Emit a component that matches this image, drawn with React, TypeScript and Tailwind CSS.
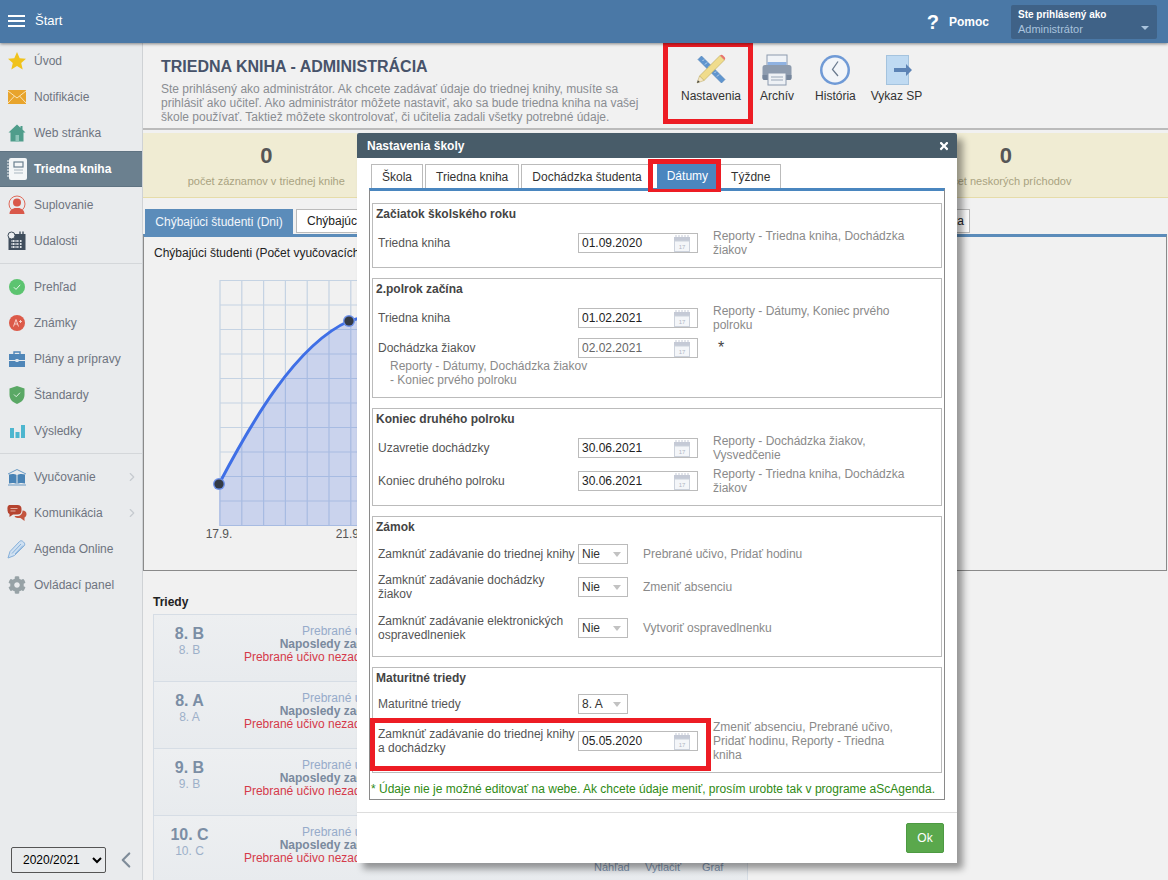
import React from 'react';
import { FaCog, FaTimes } from 'react-icons/fa';
import { ChevronLeft, ChevronRight } from 'lucide-react';

// --- Sidebar icons ---
const StarIcon = () => (
  <svg width="20" height="20" viewBox="0 0 20 20"><polygon points="10,1 12.7,7.2 19,7.7 14.2,12 15.7,18.6 10,15.1 4.3,18.6 5.8,12 1,7.7 7.3,7.2" fill="#f0c31c" /></svg>
);
const MailIcon = () => (
  <svg width="20" height="16" viewBox="0 0 20 16"><rect x="1" y="1" width="18" height="14" fill="#e8a42c" /><path d="M1 2l9 7 9-7M1 14l6.5-7M19 14l-6.5-7" stroke="#fbe4b4" strokeWidth="1" fill="none" /></svg>
);
const HouseIcon = () => (
  <svg width="20" height="20" viewBox="0 0 20 20"><path d="M10 1.5L1.5 9.5H3.5V18.5H16.5V9.5H18.5L15.5 6.6V3H13.5V4.8Z" fill="#4f9d8b" /><rect x="8.5" y="12" width="3.5" height="6.5" fill="#8cc4b8" /></svg>
);
const NotebookIcon = () => (
  <svg width="22" height="24" viewBox="0 0 22 24">
    <rect x="3" y="1" width="18" height="22" rx="2" fill="#f4f6f7" />
    <rect x="8" y="5" width="9" height="5" fill="none" stroke="#6b808f" strokeWidth="1.2" />
    <path d="M8 13h9M8 16h9" stroke="#a9b6bf" strokeWidth="1" />
    <path d="M1 4h4M1 7h4M1 10h4M1 13h4M1 16h4M1 19h4" stroke="#f4f6f7" strokeWidth="1.2" />
  </svg>
);
const PersonIcon = () => (
  <svg width="20" height="20" viewBox="0 0 20 20">
    <circle cx="10" cy="9" r="8" fill="none" stroke="#df6a5a" strokeWidth="1" />
    <circle cx="10" cy="7.5" r="4" fill="#d9584a" />
    <path d="M2.5 19c0-4 3-5 5-6h5c2 1 5 2 5 6z" fill="#d9584a" />
  </svg>
);
const CalendarIcon = () => (
  <svg width="20" height="20" viewBox="0 0 20 20">
    <rect x="1.5" y="3" width="17" height="16" fill="#3f4d5c" />
    <circle cx="4.5" cy="4.5" r="3.5" fill="#eceef0" stroke="#3f4d5c" strokeWidth="1" />
    <path d="M13 0.5v4M16 0.5v4" stroke="#3f4d5c" strokeWidth="1.4" />
    <path d="M4 10h12M4 13h12M4 16h12M6.5 9v8.5M10 9v8.5M13.5 9v8.5" stroke="#dfe3e6" strokeWidth="1.2" strokeDasharray="2 1" />
  </svg>
);
const CheckCircleIcon = () => (
  <svg width="18" height="18" viewBox="0 0 18 18"><circle cx="9" cy="9" r="8" fill="#5cc470" /><path d="M5.8 9.2l2.2 2.2 4.2-4.6" stroke="#e6f7ea" strokeWidth="1" fill="none" /></svg>
);
const GradeIcon = () => (
  <svg width="18" height="18" viewBox="0 0 18 18"><circle cx="9" cy="9" r="8" fill="#dc5a49" /><path d="M5.5 12.5L8 5.5l2.5 7M6.5 10h3.5M11 7.5h3M12.5 6v3" stroke="#f8d8d2" strokeWidth="0.9" fill="none" /></svg>
);
const CaseIcon = () => (
  <svg width="20" height="18" viewBox="0 0 20 18">
    <path d="M7 4V2h6v2" fill="none" stroke="#4f86b8" strokeWidth="1.4" />
    <rect x="2" y="4" width="16" height="6" fill="#4f86b8" /><rect x="2" y="11" width="16" height="6" fill="#4f86b8" />
    <rect x="8.5" y="9" width="3" height="3" fill="#dbe6f0" />
  </svg>
);
const ShieldIcon = () => (
  <svg width="18" height="20" viewBox="0 0 18 20"><path d="M9 1l7.5 2.5V10c0 4.5-3.5 7.5-7.5 9-4-1.5-7.5-4.5-7.5-9V3.500z" fill="#5aa865" /><path d="M6 9.500l2.200 2.200 3.800-4" stroke="#dff0e2" strokeWidth="1" fill="none" /></svg>
);
const BarsIcon = () => (
  <svg width="18" height="18" viewBox="0 0 18 18"><rect x="2" y="6" width="4" height="10" fill="#4db6cf" /><rect x="7.500" y="10" width="4" height="6" fill="#4db6cf" /><rect x="13" y="3" width="4" height="13" fill="#4db6cf" /></svg>
);
const BookIcon = () => (
  <svg width="20" height="18" viewBox="0 0 20 18">
    <path d="M1 6l9-4.500L19 6" fill="none" stroke="#6a9ac4" strokeWidth="1" />
    <path d="M2 6.500c3-1 6-.5 7.500.5v9c-1.500-1-4.500-1.500-7.500-.5zM18 6.500c-3-1-6-.5-7.500.5v9c1.500-1 4.500-1.500 7.500-.5z" fill="#4a84b6" />
    <path d="M1 17h18" stroke="#6a9ac4" strokeWidth="1" />
  </svg>
);
const ChatIcon = () => (
  <svg width="20" height="18" viewBox="0 0 20 18">
    <path d="M2 1h8.500a4 4 0 0 1 4 4v1.500a4 4 0 0 1-4 4H6L2.500 13v-3A4 4 0 0 1 .5 6.500V5A4 4 0 0 1 2 1z" fill="#b5432f" />
    <path d="M15.500 6.500c2.500 0 4 1.500 4 3.500s-1 3-2 3.500V17l-4-3h-3c-1.500 0-2.500-.8-3-2h2.500c3.500 0 5.500-2 5.500-5.500z" fill="#c4553f" />
    <path d="M3.500 4.500h7M3.500 7h5" stroke="#eec9c0" strokeWidth="0.8" />
  </svg>
);
const PenIcon = () => (
  <svg width="20" height="20" viewBox="0 0 20 20">
    <path d="M1 19l2-6.500L12.500 2.500c1.500-1.500 3-.5 4 .5s2 2.500.5 4L7.500 16.500z" fill="#cfe0f1" stroke="#86b0da" strokeWidth="1" />
    <path d="M5 14.500L14 5M8 15l8-8.500" stroke="#86b0da" strokeWidth="1" />
  </svg>
);

// --- Toolbar icons ---
const SettingsIcon = () => (
  <svg width="32" height="32" viewBox="0 0 32 32">
    <path d="M3 5.500L6.500 2 30 25.500 26.500 29z" fill="#5f95cf" stroke="#4a7db3" strokeWidth="0.6" />
    <path d="M9 5.500l-1.500 1.500M12 8.500l-2 2M15 11.500l-1.500 1.500M18 14.500l-2 2M21 17.500l-1.500 1.500M24 20.500l-2 2" stroke="#dbe8f5" strokeWidth="0.8" />
    <path d="M25 1.500l4.500 4.500L9 26.500 4.500 22z" fill="#f0dc8c" stroke="#b9a658" strokeWidth="0.6" />
    <path d="M25 1.500c1.200-1 2-.9 3 0l1.500 1.500c.9 1 1 1.800 0 3z" fill="#e8736c" />
    <path d="M4.500 22L2 29l7-2.500z" fill="#f5e6c4" stroke="#b9a658" strokeWidth="0.5" />
    <path d="M2 29l.9-2.800 1.900 1.900z" fill="#444" />
  </svg>
);
const PrinterIcon = () => (
  <svg width="32" height="32" viewBox="0 0 32 32">
    <rect x="6" y="1" width="20" height="12" fill="#f0f3f7" stroke="#8c9aae" strokeWidth="1" />
    <rect x="6.500" y="8" width="19" height="7" fill="#8fb2e2" />
    <path d="M4 11h24a2.500 2.500 0 0 1 2.500 2.500V24a2 2 0 0 1-2 2h-25a2 2 0 0 1-2-2V13.500A2.500 2.500 0 0 1 4 11z" fill="#8d9bae" />
    <path d="M1.500 21h29v3a2 2 0 0 1-2 2h-25a2 2 0 0 1-2-2z" fill="#76869c" />
    <rect x="7" y="19" width="18" height="12" fill="#eef1f5" stroke="#8c9aae" strokeWidth="1" />
    <path d="M10 23h12M10 26h12" stroke="#9aa7b8" strokeWidth="1" />
  </svg>
);
const ClockIcon = () => (
  <svg width="32" height="32" viewBox="0 0 32 32">
    <circle cx="16" cy="16" r="15" fill="#6f9ad6" />
    <circle cx="16" cy="16" r="12.500" fill="#f2f5f9" />
    <path d="M19 7.500L13.500 15.500 19 22" fill="none" stroke="#6b7b8f" strokeWidth="1.300" />
  </svg>
);
const ExportIcon = () => (
  <svg className="ml-[4px]" width="28" height="30" viewBox="0 0 28 30">
    <rect x="1.500" y="0.500" width="22" height="29" fill="#bfdaf2" stroke="#a4c3de" strokeWidth="1" />
    <path d="M9 13h12V9l6 6-6 6v-4H9z" fill="#5c83b5" />
  </svg>
);

const SmallCalendar = () => (
  <svg width="18" height="17" viewBox="0 0 18 17">
    <rect x="1" y="2" width="16" height="5" fill="#c5cad6" />
    <path d="M3 0v3M6 0v3M9 0v3M12 0v3M15 0v3" stroke="#c5cad6" strokeWidth="1" />
    <rect x="1.500" y="6" width="15" height="10.500" fill="#f4f6f9" stroke="#ccd2dc" strokeWidth="1" />
    <text x="9" y="14" textAnchor="middle" fontSize="6" fill="#b0b7c4">17</text>
  </svg>
);

// --- Sidebar ---
const NavItem = ({ icon, label, active, more }: { icon: React.ReactNode; label: string; active?: boolean; more?: boolean }) => (
  <div className={`flex h-9 items-center text-xs ${active ? 'bg-[#6b808f] border-y border-[#5f7382] font-bold text-white' : 'text-[#6e7480]'}`}>
    <span className="flex w-[34px] shrink-0 justify-center">{icon}</span>
    <span className="flex-1">{label}</span>
    {more && <ChevronRight className="mr-[3px] text-[#c6cacf]" size={14} />}
  </div>
);

const Sidebar = () => (
  <aside className="flex w-[143px] shrink-0 flex-col border-r border-[#cfd2d5] bg-[#e9ebed]">
    <NavItem icon={<StarIcon />} label="Úvod" />
    <NavItem icon={<MailIcon />} label="Notifikácie" />
    <NavItem icon={<HouseIcon />} label="Web stránka" />
    <NavItem icon={<NotebookIcon />} label="Triedna kniha" active />
    <NavItem icon={<PersonIcon />} label="Suplovanie" />
    <NavItem icon={<CalendarIcon />} label="Udalosti" />
    <div className="mt-1 mb-[5px] border-t border-[#d4d7da]" />
    <NavItem icon={<CheckCircleIcon />} label="Prehľad" />
    <NavItem icon={<GradeIcon />} label="Známky" />
    <NavItem icon={<CaseIcon />} label="Plány a prípravy" />
    <NavItem icon={<ShieldIcon />} label="Štandardy" />
    <NavItem icon={<BarsIcon />} label="Výsledky" />
    <div className="mt-1 mb-[5px] border-t border-[#d4d7da]" />
    <NavItem icon={<BookIcon />} label="Vyučovanie" more />
    <NavItem icon={<ChatIcon />} label="Komunikácia" more />
    <NavItem icon={<PenIcon />} label="Agenda Online" />
    <NavItem icon={<FaCog size={18} color="#97a2a6" />} label="Ovládací panel" />
    <div className="mt-auto mb-[7px] flex items-center pl-[11px]">
      <select defaultValue="2020/2021" className="h-[26px] w-[95px] rounded-[2px] border border-[#555] bg-[#e9ebed] pl-[7px] text-xs text-black">
        <option>2020/2021</option>
      </select>
      <ChevronLeft className="ml-[7px] text-[#7f8c99]" size={26} />
    </div>
  </aside>
);

// --- Page top ---
const ToolButton = ({ icon, label, className }: { icon: React.ReactNode; label: string; className: string }) => (
  <div className={`flex flex-col items-center pt-[11px] text-xs text-[#333] ${className}`}>
    <span className="flex h-[32px] items-center">{icon}</span>
    <span className="mt-[3px] leading-[14px]">{label}</span>
  </div>
);

const ClassRow = ({ name }: { name: string }) => (
  <div className="flex h-[67px] border-b border-[#d6dde5] bg-gradient-to-b from-[#edeff1] to-[#e8ebee] text-xs">
    <div className="flex w-[71px] shrink-0 flex-col items-center pt-[10px]">
      <span className="text-base font-bold leading-[18px] text-[#7b8ea5]">{name}</span>
      <span className="leading-[14px] text-[#9db0c9]">{name}</span>
    </div>
    <div className="ml-[21px] flex w-[206px] shrink-0 flex-col items-center whitespace-nowrap pt-[10px] leading-[13px]">
      <span className="text-[#96abca]">Prebrané učivo: 0</span>
      <span className="font-bold text-[#7a8a9e]">Naposledy zadané: 17.9.</span>
      <span className="text-[#d53a4a]">Prebrané učivo nezadané od 17.9.2020</span>
    </div>
    <div className="ml-[142px] flex pt-[44px] text-[11px] leading-[14px] text-[#7d93ae]">
      <span className="w-[51px]">Náhľad</span>
      <span className="w-[57px]">Vytlačiť</span>
      <span>Graf</span>
    </div>
  </div>
);

const Chart = () => {
  const xs = [220, 241.8, 263.6, 285.4, 307.2, 329, 350.8, 372.6, 394.4, 416.2, 438, 459.8, 481.6, 503.4, 525.2, 547, 568.8];
  const ys = [280.5, 305, 329.5, 354, 378.5, 403, 427.5, 452, 476.5, 501, 525.5];
  return (
    <svg className="mt-[16px] ml-[56px] block" width="520" height="270" viewBox="200 276 520 270">
      {xs.map(x => <line key={x} x1={x} x2={x} y1="280" y2="526" stroke="#c5d3e3" strokeWidth="1.2" />)}
      {ys.map(y => <line key={y} x1="220" x2="569" y1={y} y2={y} stroke="#c5d3e3" strokeWidth="1.2" />)}
      <path d="M219 484C250 425 295 345 349 321C420 300 500 300 569 320V526H219Z" fill="#4169e1" fillOpacity="0.22" />
      <path d="M219 484C250 425 295 345 349 321C420 300 500 300 569 320" fill="none" stroke="#3f6fe6" strokeWidth="3" />
      <circle cx="219" cy="484" r="6" fill="#6d90e8" /><circle cx="219" cy="484" r="4.6" fill="#333a45" />
      <circle cx="349" cy="321" r="6" fill="#6d90e8" /><circle cx="349" cy="321" r="4.6" fill="#333a45" />
      <text x="219" y="538" textAnchor="middle" fontSize="12" fill="#555">17.9.</text>
      <text x="349" y="538" textAnchor="middle" fontSize="12" fill="#555">21.9.</text>
    </svg>
  );
};

const Main = () => (
  <main className="flex-1 bg-[#f1f1f1]">
    <div className="flex h-[87px] border-b-2 border-[#bbb]">
      <div className="w-[538px] shrink-0 pl-[18px] pt-[13px]">
        <h1 className="mt-px text-base font-bold leading-[20px] text-[#47536a]">TRIEDNA KNIHA - ADMINISTRÁCIA</h1>
        <p className="mt-[5px] text-xs leading-[14px] text-[#8a8d92]">
          Ste prihlásený ako administrátor. Ak chcete zadávať údaje do triednej knihy, musíte sa<br />
          prihlásiť ako učiteľ. Ako administrátor môžete nastaviť, ako sa bude triedna kniha na vašej<br />
          škole používať. Taktiež môžete skontrolovať, či učitelia zadali všetky potrebné údaje.
        </p>
      </div>
      <ToolButton icon={<SettingsIcon />} label="Nastavenia" className="" />
      <ToolButton icon={<PrinterIcon />} label="Archív" className="ml-[19px]" />
      <ToolButton icon={<ClockIcon />} label="História" className="ml-[21px]" />
      <ToolButton icon={<ExportIcon />} label="Vykaz SP" className="ml-[15px]" />
    </div>

    <div className="mt-[3px] grid h-[65px] grid-cols-4 border-b border-[#e6dca9] bg-[#f0ecd3] pr-[39px] text-center">
      <div className="pt-[10px]">
        <div className="text-[22px] font-bold leading-[26px] text-[#565656]">0</div>
        <div className="mt-[5px] text-[11px] leading-[14px] text-[#a9a381]">počet záznamov v triednej knihe</div>
      </div>
      <div className="col-start-4 pt-[10px]">
        <div className="text-[22px] font-bold leading-[26px] text-[#565656]">0</div>
        <div className="mt-[5px] text-[11px] leading-[14px] text-[#a9a381]">počet neskorých príchodov</div>
      </div>
    </div>

    <div className="mt-[11px] flex h-[25px] w-[827px] pl-[2px] text-xs">
      <div className="flex h-[25px] w-[148px] items-center justify-center bg-[#5b8cba] text-[#f2f6fa]">Chýbajúci študenti (Dni)</div>
      <div className="ml-[3px] flex h-[24px] items-center border border-[#bbb] bg-white px-[10px] text-[#222]">Chýbajúci študenti (Hodiny)</div>
      <div className="ml-auto flex h-[24px] items-center border border-[#bbb] bg-white px-[5px] text-[#222]">Štatistika</div>
    </div>
    <div className="mr-px h-[337px] border border-t-[3px] border-[#8a8a8a] border-t-[#5b8cba]">
      <p className="ml-[10px] mt-[9px] text-xs leading-[14px] text-[#222]">Chýbajúci študenti (Počet vyučovacích hodín)</p>
      <Chart />
    </div>

    <div className="ml-[10px] mt-[24px] w-[595px]">
      <h2 className="text-xs font-bold leading-[14px] text-[#222]">Triedy</h2>
      <div className="mt-[5px] border border-[#d6dde5]">
        <ClassRow name="8. B" />
        <ClassRow name="8. A" />
        <ClassRow name="9. B" />
        <ClassRow name="10. C" />
      </div>
    </div>
  </main>
);

// --- Settings dialog ---
const Section = ({ title, height, children }: { title: string; height: string; children: React.ReactNode }) => (
  <section className={`border border-[#bbb] pt-[3px] ${height}`}>
    <h3 className="pl-[3px] text-xs font-bold leading-[14px] text-[#444]">{title}</h3>
    {children}
  </section>
);

const Row = ({ label, control, note, className }: { label: string; control: React.ReactNode; note?: React.ReactNode; className: string }) => (
  <div className={`flex h-5 items-center pl-[5px] text-xs leading-[14px] ${className}`}>
    <span className="w-[200px] shrink-0 pr-[2px] text-[#555]">{label}</span>
    {control}
    <span className="ml-[15px] w-[195px] text-[#8a8a8a]">{note}</span>
  </div>
);

const DateInput = ({ value, muted }: { value: string; muted?: boolean }) => (
  <div className={`flex h-5 w-[120px] shrink-0 items-center justify-between border border-[#bbb] bg-white pl-[3px] pr-[6px] ${muted ? 'text-[#666]' : 'text-[#222]'}`}>
    <span>{value}</span>
    <SmallCalendar />
  </div>
);

const SelectBox = ({ value }: { value: string }) => (
  <div className="flex h-5 w-[50px] shrink-0 items-center justify-between border border-[#bbb] bg-white pl-[3px] pr-[6px] text-[#333]">
    <span>{value}</span>
    <span className="h-0 w-0 border-x-4 border-t-[5px] border-x-transparent border-t-[#c2c2c2]" />
  </div>
);

const TabLabel = ({ label, className }: { label: string; className?: string }) => (
  <div className={`flex h-6 items-center border border-b-0 border-[#bbb] bg-white px-[10px] text-[#333] ${className ?? ''}`}>{label}</div>
);

const SettingsDialog = () => (
  <div className="absolute left-[357px] top-[133px] w-[600px] rounded-t-[2px] bg-white shadow-[6px_6px_7px_rgba(0,0,0,0.38)]">
    <div className="flex h-[25px] items-center justify-between rounded-t-[2px] bg-[#485c69] pl-[10px] pr-[7px]">
      <span className="text-xs font-bold text-white">Nastavenia školy</span>
      <FaTimes size={12} color="#fff" />
    </div>
    <div className="px-[12px] pt-[6px] text-xs">
      <div className="flex pl-[2px]">
        <TabLabel label="Škola" />
        <TabLabel label="Triedna kniha" className="ml-[2px]" />
        <TabLabel label="Dochádzka študenta" className="ml-[2px]" />
        <div className="ml-[4px] flex h-6 items-center bg-[#4a86bf] px-[10px] text-white">Dátumy</div>
        <TabLabel label="Týždne" className="ml-[2px]" />
      </div>
      <div className="border border-t-[3px] border-[#8a8a8a] border-t-[#4a86bf] px-[2px] pt-[12px]">
        <div className="flex flex-col gap-[10px]">
          <Section title="Začiatok školského roku" height="h-[65px]">
            <Row className="mt-[12px]" label="Triedna kniha" control={<DateInput value="01.09.2020" />} note="Reporty - Triedna kniha, Dochádzka žiakov" />
          </Section>
          <Section title="2.polrok začína" height="h-[120px]">
            <Row className="mt-[12px]" label="Triedna kniha" control={<DateInput value="01.02.2021" />} note="Reporty - Dátumy, Koniec prvého polroku" />
            <Row className="mt-[10px]" label="Dochádzka žiakov" control={<DateInput value="02.02.2021" muted />} note={<span className="ml-[5px] text-base leading-[14px] text-[#444]">*</span>} />
            <p className="mt-px pl-[17px] text-xs leading-[14px] text-[#8a8a8a]">Reporty - Dátumy, Dochádzka žiakov<br />- Koniec prvého polroku</p>
          </Section>
          <Section title="Koniec druhého polroku" height="h-[98px]">
            <Row className="mt-[12px]" label="Uzavretie dochádzky" control={<DateInput value="30.06.2021" />} note="Reporty - Dochádzka žiakov, Vysvedčenie" />
            <Row className="mt-[13px]" label="Koniec druhého polroku" control={<DateInput value="30.06.2021" />} note="Reporty - Triedna kniha, Dochádzka žiakov" />
          </Section>
          <Section title="Zámok" height="h-[141px]">
            <Row className="mt-[10px]" label="Zamknúť zadávanie do triednej knihy" control={<SelectBox value="Nie" />} note="Prebrané učivo, Pridať hodinu" />
            <Row className="mt-[13px]" label="Zamknúť zadávanie dochádzky žiakov" control={<SelectBox value="Nie" />} note="Zmeniť absenciu" />
            <Row className="mt-[21px]" label="Zamknúť zadávanie elektronických ospravedlneniek" control={<SelectBox value="Nie" />} note="Vytvoriť ospravedlnenku" />
          </Section>
          <Section title="Maturitné triedy" height="h-[106px]">
            <Row className="mt-[9px]" label="Maturitné triedy" control={<SelectBox value="8. A" />} />
            <Row className="mt-[17px]" label="Zamknúť zadávanie do triednej knihy a dochádzky" control={<DateInput value="05.05.2020" />} note="Zmeniť absenciu, Prebrané učivo, Pridať hodinu, Reporty - Triedna kniha" />
          </Section>
        </div>
        <p className="-ml-px mt-[9px] mb-[3px] text-xs leading-[14px] text-[#2f8a14]">* Údaje nie je možné editovať na webe. Ak chcete údaje meniť, prosím urobte tak v programe aScAgenda.</p>
      </div>
    </div>
    <div className="mt-[12px] flex justify-end border-t border-[#ddd] pt-[10px] pb-[10px] pr-[13px]">
      <div className="flex h-[30px] w-[38px] items-center justify-center rounded-[2px] border border-[#4d9a42] bg-[#5aa84c] text-xs text-white">Ok</div>
    </div>
  </div>
);

export default function App() {
  return (
    <div className="relative h-[880px] w-[1168px] overflow-hidden bg-[#f1f1f1] font-['Liberation_Sans',Arial,sans-serif]">
      {/* Top bar */}
      <header className="relative z-10 flex h-[43px] items-center bg-[#4a78a6] pl-[8px] text-white shadow-[0_1px_3px_rgba(0,0,0,0.45)]">
        <div className="-mt-px flex w-[17px] flex-col gap-[3px]">
          <span className="h-[2px] bg-white" />
          <span className="h-[2px] bg-white" />
          <span className="h-[2px] bg-white" />
        </div>
        <span className="-mt-[2px] ml-[10px] text-[13px]">Štart</span>
        <span className="ml-auto text-xl font-bold">?</span>
        <span className="ml-[10px] text-xs font-bold">Pomoc</span>
        <div className="ml-[22px] mr-[11px] flex h-[34px] w-[146px] items-center justify-between rounded-[2px] bg-[#3f6287] pl-[7px] pr-[8px]">
          <div className="pt-px leading-[14px]">
            <div className="text-[10px] font-bold">Ste prihlásený ako</div>
            <div className="text-[11px] text-[#a9c3dd]">Administrátor</div>
          </div>
          <span className="mt-[12px] h-0 w-0 border-x-[4px] border-t-[4px] border-x-transparent border-t-[#a9c3dd]" />
        </div>
      </header>

      <div className="flex h-[837px]">
        <Sidebar />
        <Main />
      </div>

      <SettingsDialog />

      {/* Red highlight frames drawn over the screenshot */}
      <div className="absolute left-[663px] top-[42px] h-[82px] w-[90px] border-[5px] border-[#ed1c24]" />
      <div className="absolute left-[648px] top-[159px] h-[33px] w-[73px] border-[5px] border-b-[3px] border-[#ed1c24]" />
      <div className="absolute left-[370px] top-[718px] h-[53px] w-[341px] border-[5px] border-[#ed1c24]" />
    </div>
  );
}
